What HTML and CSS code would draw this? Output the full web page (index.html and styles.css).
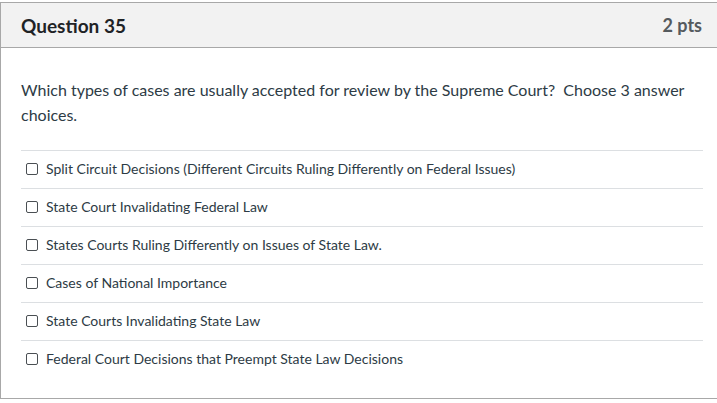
FILE: index.html
```html
<!DOCTYPE html>
<html>
<head>
<meta charset="utf-8">
<link rel="stylesheet" href="styles.css">
</head>
<body>
<div class="quiz">
  <div class="header">
    <span class="title">Question 35</span>
    <span class="pts">2 pts</span>
  </div>
  <div class="content">
    <p class="qtext">Which types of cases are usually accepted for review by the Supreme Court?&nbsp; Choose 3 answer choices.</p>
    <div class="answers">
      <label class="answer"><span class="box"></span>Split Circuit Decisions (Different Circuits Ruling Differently on Federal Issues)</label>
      <label class="answer"><span class="box"></span>State Court Invalidating Federal Law</label>
      <label class="answer"><span class="box"></span>States Courts Ruling Differently on Issues of State Law.</label>
      <label class="answer"><span class="box"></span>Cases of National Importance</label>
      <label class="answer"><span class="box"></span>State Courts Invalidating State Law</label>
      <label class="answer"><span class="box"></span>Federal Court Decisions that Preempt State Law Decisions</label>
    </div>
  </div>
</div>
</body>
</html>
```

FILE: styles.css
```css
html, body {
  margin: 0;
  padding: 0;
  background: #ffffff;
  overflow: hidden;
}
body {
  font-family: Lato, "Noto Sans", sans-serif;
  color: #2d3b45;
}
.quiz {
  margin-top: 2px;
  width: 720px;
  border: 1px solid #a8a8a8;
  border-right: none;
  box-sizing: border-box;
}
.header {
  height: 45px;
  background: #f2f2f2;
  border-bottom: 1px solid #a8a8a8;
  display: flex;
  align-items: center;
  justify-content: space-between;
  padding: 0 16px 0 20px;
  width: 717px;
  box-sizing: border-box;
}
.title {
  font-size: 19px;
  font-weight: 700;
  color: #1f2326;
}
.pts {
  font-size: 18px;
  font-weight: 700;
  color: #555a5e;
}
.content {
  padding: 29px 15px 20px 20px;
  width: 717px;
  box-sizing: border-box;
}
.qtext {
  margin: 0;
  font-size: 16px;
  line-height: 25px;
  color: #2d3b45;
  width: 680px;
}
.answers {
  margin-top: 23px;
}
.answer {
  display: flex;
  align-items: center;
  height: 38px;
  border-top: 1px solid #dcdfe2;
  font-size: 14px;
  color: #2d3b45;
  box-sizing: border-box;
  padding-left: 5px;
  padding-bottom: 2px;
}
.box {
  width: 10px;
  height: 10px;
  border: 1px solid #4a4f53;
  border-radius: 2px;
  margin-right: 8px;
  background: #fff;
  flex: none;
}
```
